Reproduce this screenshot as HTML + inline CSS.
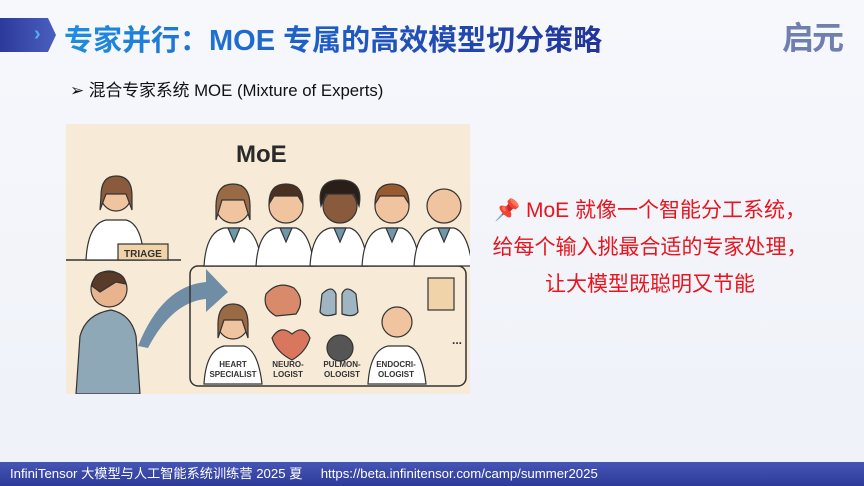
<!DOCTYPE html><html><head><meta charset="utf-8"><style>
*{margin:0;padding:0;box-sizing:border-box}
body{width:864px;height:486px;overflow:hidden;background:linear-gradient(#f7f8fc,#eef1f8);font-family:"Liberation Sans","Noto Sans CJK SC",sans-serif;position:relative}
.tab{position:absolute;left:0;top:18px;width:56px;height:34px;background:linear-gradient(90deg,#2c3a9a,#4a5fc0);clip-path:polygon(0 0,48px 0,56px 50%,48px 100%,0 100%)}
.tab span{position:absolute;left:34px;top:5px;color:#4fb0f0;font-size:20px;font-weight:bold}
.title{position:absolute;left:64px;top:17px;font-size:29px;font-weight:bold;background:linear-gradient(90deg,#1e8ee0,#1f5fc8 45%,#23349a);-webkit-background-clip:text;color:transparent;white-space:nowrap;font-family:"Liberation Sans","Noto Sans CJK SC",sans-serif}
.logo{position:absolute;left:782px;top:13px;font-size:32px;font-weight:bold;color:#6f7fae;letter-spacing:-2px}
.sub{position:absolute;left:70px;top:77px;font-size:16.8px;color:#111}
.img{position:absolute;left:66px;top:124px;width:404px;height:270px;background:#f7ebd8}
.right{position:absolute;left:470px;top:192px;width:360px;text-align:center;color:#e8141e;font-size:21px;line-height:37px}
.foot{position:absolute;left:0;top:462px;width:864px;height:24px;background:linear-gradient(#4656b4,#2e3a9a);color:#fff;font-size:13.2px;line-height:24px;padding-left:10px;white-space:nowrap}
</style></head><body>
<div class="tab"><span>›</span></div>
<div class="title">专家并行：MOE 专属的高效模型切分策略</div>
<div class="logo">启元</div>
<div class="sub">➢ 混合专家系统 MOE (Mixture of Experts)</div>
<div class="img"><svg width="404" height="270" viewBox="0 0 404 270">
<text x="170" y="38" font-family="Liberation Sans" font-weight="bold" font-size="24" fill="#2a2a2a">MoE</text>
<line x1="0" y1="136" x2="115" y2="136" stroke="#333" stroke-width="1.5"/>
<g stroke="#333" stroke-width="1.2">
<path d="M20 136 Q22 100 40 96 L60 96 Q76 100 78 136Z" fill="#fff"/>
<circle cx="50" cy="72" r="15" fill="#f1c4a0"/><path d="M35 72 Q35 52 50 52 Q66 52 66 72 L66 86 L60 70 L40 70 L34 86Z" fill="#8a5a3c"/>
<rect x="52" y="120" width="50" height="16" fill="#f0d3a8"/>
</g>
<text x="58" y="133" font-size="10" font-weight="bold" fill="#333" font-family="Liberation Sans">TRIAGE</text>
<g stroke="#333" stroke-width="1.2">
<path d="M10 270 L14 212 Q20 190 45 186 Q65 190 70 212 L74 270Z" fill="#8ea8b8"/>
<circle cx="43" cy="165" r="18" fill="#e8b48e"/><path d="M26 162 Q28 146 44 148 Q58 148 60 160 L50 158 L34 168Z" fill="#5a3a28"/>
</g>
<path d="M72 222 Q96 162 140 158 L140 145 L162 168 L140 188 L140 175 Q106 178 82 224Z" fill="#6f8ea6"/>
<rect x="124" y="142" width="276" height="120" rx="8" fill="none" stroke="#333" stroke-width="1.5"/>
<g stroke="#333" stroke-width="1.2">
<g id="d"><path d="M138 142 Q140 108 158 104 L178 104 Q192 108 196 142Z" fill="#fff"/><path d="M162 104 L168 118 L174 104Z" fill="#6f97aa"/></g>
<use href="#d" x="52"/><use href="#d" x="106"/><use href="#d" x="158"/><use href="#d" x="210"/>
<circle cx="167" cy="82" r="17" fill="#f1c4a0"/><path d="M150 82 Q150 60 167 60 Q184 60 184 82 L184 96 L178 76 L156 76 L150 96Z" fill="#9a6a44"/>
<circle cx="220" cy="82" r="17" fill="#f1c4a0"/><path d="M203 80 Q203 60 220 60 Q237 60 237 80 L232 72 L208 72Z" fill="#4a3020"/>
<circle cx="274" cy="82" r="17" fill="#8a5a3c"/><path d="M255 82 Q250 56 274 56 Q298 56 293 82 L288 70 L260 70Z" fill="#2a1e18"/>
<circle cx="326" cy="82" r="17" fill="#f1c4a0"/><path d="M309 80 Q309 60 326 60 Q343 60 343 80 L338 72 L314 72Z" fill="#9a5a30"/>
<circle cx="378" cy="82" r="17" fill="#f1c4a0"/>
<path d="M138 260 Q140 226 158 222 L178 222 Q192 226 196 260Z" fill="#fff"/>
<circle cx="167" cy="200" r="15" fill="#f1c4a0"/><path d="M152 200 Q152 180 167 180 Q182 180 182 200 L182 214 L176 196 L158 196 L152 214Z" fill="#9a6a44"/>
<path d="M200 170 Q212 156 228 164 Q240 176 230 190 L210 192Q196 184 200 170Z" fill="#d98a6a"/>
<path d="M206 214 Q214 200 226 210 Q238 200 244 214 Q240 228 226 236 Q210 228 206 214Z" fill="#d9775e"/>
<path d="M256 170 Q266 160 270 170 L270 190 Q258 194 254 188Z M276 170 Q280 160 290 170 L292 188 Q288 194 276 190Z" fill="#9fb6c2"/>
<circle cx="274" cy="224" r="13" fill="#555"/>
<path d="M302 260 Q304 226 322 222 L342 222 Q356 226 360 260Z" fill="#fff"/>
<circle cx="331" cy="198" r="15" fill="#f1c4a0"/>
<rect x="362" y="154" width="26" height="32" fill="#f0d3a8"/>
</g>
<text x="386" y="220" font-size="12" font-weight="bold" fill="#333">...</text>
<g font-family="Liberation Sans" font-size="8" font-weight="bold" fill="#333" text-anchor="middle">
<text x="167" y="243">HEART</text><text x="167" y="253">SPECIALIST</text>
<text x="222" y="243">NEURO-</text><text x="222" y="253">LOGIST</text>
<text x="276" y="243">PULMON-</text><text x="276" y="253">OLOGIST</text>
<text x="330" y="243">ENDOCRI-</text><text x="330" y="253">OLOGIST</text>
</g>
</svg></div>
<div class="right">📌 MoE 就像一个智能分工系统，<br>给每个输入挑最合适的专家处理，<br>让大模型既聪明又节能</div>
<div class="foot">InfiniTensor 大模型与人工智能系统训练营 2025 夏 &nbsp;&nbsp;&nbsp; https://beta.infinitensor.com/camp/summer2025</div>
</body></html>
